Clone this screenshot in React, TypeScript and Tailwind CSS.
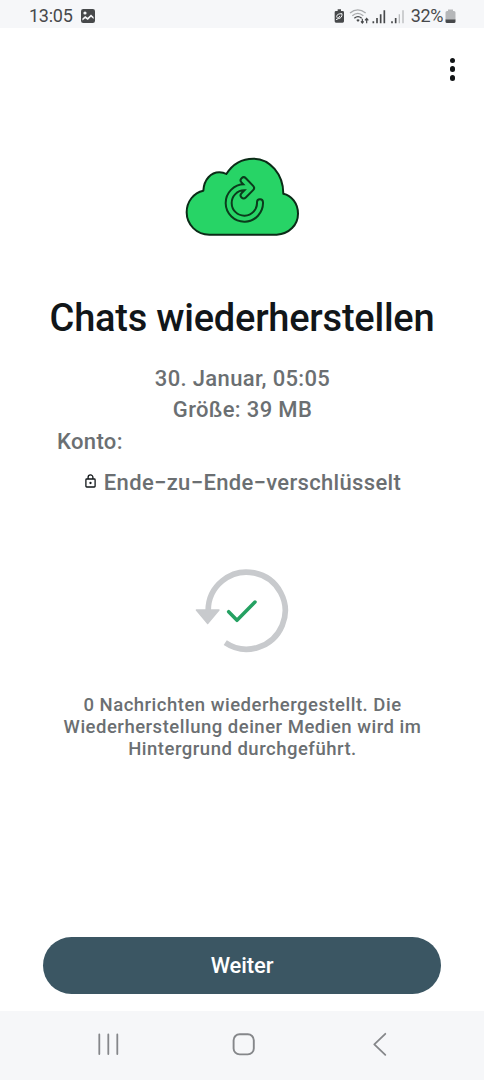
import React from "react";

function StatusBar() {
  return (
    <header className="flex h-[28px] shrink-0 items-center justify-between bg-[#f6f7f9] pl-[29px] pr-[28px] pt-[4px] text-[#47494b]">
      <div className="flex items-center gap-[7px]">
        <span className="text-[18px] leading-[24px] tracking-[-0.25px]">13:05</span>
        <svg width="16" height="16" viewBox="0 0 16 16">
          <rect x="1" y="1" width="14" height="14" rx="2.2" fill="#47494b" />
          <circle cx="5" cy="5" r="1.6" fill="#f6f7f9" />
          <path d="M2.4 10.4 L5.2 7.9 L7.6 9.8 L11 6.4 L13.6 9 V11 L11 8.8 L7.8 12 L5.2 10.2 L2.4 12.4Z" fill="#f6f7f9" />
        </svg>
      </div>
      <div className="flex h-[24px] items-start">
        <svg className="mr-[2px]" width="78" height="24" viewBox="0 6 234 72">
          <path d="M20 22 h10 v5 h5 q4 0 4 4 v27 q0 4 -4 4 h-20 q-4 0 -4 -4 v-27 q0 -4 4 -4 h5z" fill="#47494b" />
          <path d="M15 53 L22 50 Q34 48 33 35 Q18 35 17 43 Q17 46 21 49 L27 42" fill="none" stroke="#f6f7f9" strokeWidth="3" />
          <g fill="none" strokeWidth="4" stroke="#a9abad">
            <path d="M57 33 Q80 14 104 33" />
            <path d="M64 41 Q80 27 97 41" />
          </g>
          <path d="M70 49 Q81 39 92 49" fill="none" stroke="#47494b" strokeWidth="4" />
          <path d="M76 54 Q81 50 86 54 L81 60Z" fill="#47494b" />
          <path d="M94 50 V62 M90 58 L94 63 L98 58 M107 64 V50 M102 55 L107 49 L112 55" fill="none" stroke="#47494b" strokeWidth="3.5" />
          <path d="M127 58 V64 M138 48 V64 M149 37 V64 M160 25 V64" stroke="#47494b" strokeWidth="5" />
          <path d="M183 58 V64 M194 48 V64" stroke="#47494b" strokeWidth="5" />
          <path d="M205 37 V64 M216 25 V64" stroke="#b9bbbd" strokeWidth="4" />
        </svg>
        <span className="text-[18px] leading-[24px] tracking-[-0.4px]">32%</span>
        <svg className="ml-[2px] mt-[4px]" width="11" height="16" viewBox="0 0 11 16">
          <path d="M3 1.5 h5 v1.6 h1 q1.5 0 1.5 1.5 V12 H0.5 V4.6 Q0.5 3.1 2 3.1 h1z" fill="#b5b7b9" />
          <path d="M0.5 11.5 h10 v2 q0 1.5 -1.5 1.5 h-7 q-1.5 0 -1.5 -1.5z" fill="#47494b" />
        </svg>
      </div>
    </header>
  );
}

function CloudIcon() {
  return (
    <svg width="134" height="100" viewBox="0 0 402 300">
      <path
        d="M100 266 H302 C340 264 366 236 366 203 C366 172 346 148 322 143 C322 85 282 38 232 38 C197 38 168 57 151 84 C144 80 138 79 130 79 C105 79 84 100 82 134 C53 140 32 167 32 199 C32 236 62 266 100 266Z"
        fill="#27d466"
        stroke="#0b2b17"
        strokeWidth="6"
        strokeLinejoin="round"
      />
      <g fill="none" strokeLinecap="round" strokeLinejoin="round">
        <path d="M252 169 A47 47 0 1 1 205 124 H218 M203 103 L225 126 L203 148" stroke="#0b3b1c" strokeWidth="24" />
        <path d="M252 169 A47 47 0 1 1 205 124 H218 M203 103 L225 126 L203 148" stroke="#27d466" strokeWidth="12" />
      </g>
    </svg>
  );
}

function RestoredIcon() {
  return (
    <svg width="114" height="100" viewBox="0 0 342 300">
      <path d="M66.5 152 A115.5 115.5 0 1 1 117.7 247.9" fill="none" stroke="#c8cacd" strokeWidth="17" />
      <path d="M31 150 H99 L65 191Z" fill="#c8cacd" stroke="#c8cacd" strokeWidth="4" strokeLinejoin="round" />
      <path d="M128 155 L153 181 L207 126" fill="none" stroke="#25a162" strokeWidth="10.5" strokeLinecap="round" strokeLinejoin="round" />
    </svg>
  );
}

function NavBar() {
  return (
    <nav className="flex h-[69px] shrink-0 items-start justify-between bg-[#f6f7f9] pl-[96px] pr-[92px] pt-[21px]">
      <svg width="25" height="25" viewBox="0 0 25 25" stroke="#85878a" strokeWidth="1.8" strokeLinecap="round">
        <path d="M3.3 2.5 V22 M12.3 2.5 V22 M21.3 2.5 V22" />
      </svg>
      <svg width="25" height="25" viewBox="0 0 25 25" fill="none" stroke="#85878a" strokeWidth="1.9">
        <rect x="1.6" y="2.2" width="20.2" height="20.2" rx="6" />
      </svg>
      <svg width="25" height="25" viewBox="0 0 25 25" fill="none" stroke="#85878a" strokeWidth="1.8" strokeLinecap="round" strokeLinejoin="round">
        <path d="M18.3 1.8 L7.3 12.3 L18.3 22.8" />
      </svg>
    </nav>
  );
}

export default function App() {
  return (
    <div className="flex h-[1080px] w-[484px] flex-col overflow-hidden bg-white font-['Roboto',sans-serif]">
      <StatusBar />
      <div className="flex h-[118px] shrink-0 justify-end pr-[28.7px] pt-[29.7px]">
        <button aria-label="Menü" className="flex h-[24px] flex-col items-center gap-[2.8px]">
          <span className="size-[5.8px] rounded-full bg-[#111416]" />
          <span className="size-[5.8px] rounded-full bg-[#111416]" />
          <span className="size-[5.8px] rounded-full bg-[#111416]" />
        </button>
      </div>
      <main className="flex flex-1 flex-col items-center">
        <div className="flex h-[100px] w-full justify-center pl-px">
          <CloudIcon />
        </div>
        <h1 className="mt-[49px] whitespace-nowrap text-[38px] font-medium leading-[46px] tracking-[-0.23px] text-[#111619]">Chats wiederherstellen</h1>
        <div className="mt-[22px] w-full pl-[57px] pr-[56px] text-center text-[22px] font-medium leading-[31.3px] tracking-[0.35px] text-[#6b6f72]">
          <p>30. Januar, 05:05</p>
          <p>Größe: 39 MB</p>
          <p className="text-left">Konto:</p>
        </div>
        <div className="mt-[10px] flex items-center gap-[8px] pl-[2px] text-[22px] font-medium leading-[31px] tracking-[0.33px] text-[#6b6f72]">
          <svg className="mb-[2px]" width="11" height="14" viewBox="0 0 11 14" fill="none" stroke="#111619" strokeWidth="1.3">
            <rect x="0.9" y="5" width="9.2" height="8" rx="0.8" />
            <path d="M3.1 5 V3.3 a2.4 2.4 0 0 1 4.8 0 V5" />
            <circle cx="5.5" cy="9" r="0.5" fill="#111619" />
          </svg>
          <span className="whitespace-nowrap">Ende−zu−Ende−verschlüsselt</span>
        </div>
        <div className="mt-[62px] flex h-[100px] w-full justify-center pl-[2px]">
          <RestoredIcon />
        </div>
        <p className="mt-[34px] whitespace-nowrap pl-px text-center text-[18.5px] font-medium leading-[22px] tracking-[0.5px] text-[#6b6f72]">
          0 Nachrichten wiederhergestellt. Die
          <br />
          Wiederherstellung deiner Medien wird im
          <br />
          Hintergrund durchgeführt.
        </p>
      </main>
      <div className="flex shrink-0 px-[43px] pb-[17px]">
        <button className="h-[57px] w-full rounded-full bg-[#3b5663] text-[22px] font-medium leading-[57px] tracking-[-0.1px] text-white">Weiter</button>
      </div>
      <NavBar />
    </div>
  );
}
